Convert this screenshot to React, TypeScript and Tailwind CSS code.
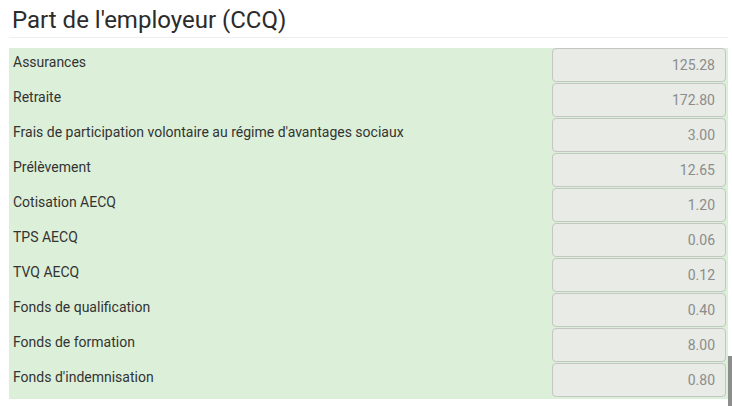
const rows: [string, string][] = [
  ['Assurances', '125.28'],
  ['Retraite', '172.80'],
  ["Frais de participation volontaire au régime d'avantages sociaux", '3.00'],
  ['Prélèvement', '12.65'],
  ['Cotisation AECQ', '1.20'],
  ['TPS AECQ', '0.06'],
  ['TVQ AECQ', '0.12'],
  ['Fonds de qualification', '0.40'],
  ['Fonds de formation', '8.00'],
  ["Fonds d'indemnisation", '0.80'],
];

export default function App() {
  return (
    <div className="relative w-[732px] h-[406px] overflow-hidden bg-white font-['Roboto',sans-serif]">
      <div className="pl-[9px] pr-[4px]">
        <h2 className="pl-[3px] pt-[5px] text-[24px] leading-[30px] text-[#2b2b2b]">Part de l'employeur (CCQ)</h2>
        <div className="mt-[2px] h-px bg-[#eceeef]" />
        <div className="mt-[10px] bg-[#dcefd8] pb-px">
          {rows.map(([label, value]) => (
            <div key={label} className="flex h-[35px]">
              <div className="flex-1 pl-[4px] pt-[5px] text-[14px] leading-[18px] text-[#333]">{label}</div>
              <div className="w-[176px] pr-[2px]">
                <div className="h-[34px] rounded-[4px] border border-[#c4c6c2] bg-[#e8ebe6] px-[10px] text-right text-[14px] leading-[32px] text-[#8c8c8c]">
                  {value}
                </div>
              </div>
            </div>
          ))}
        </div>
      </div>
      <div className="absolute right-0 top-[356px] h-[50px] w-[4px] bg-[#8d8d8d]" />
    </div>
  );
}
